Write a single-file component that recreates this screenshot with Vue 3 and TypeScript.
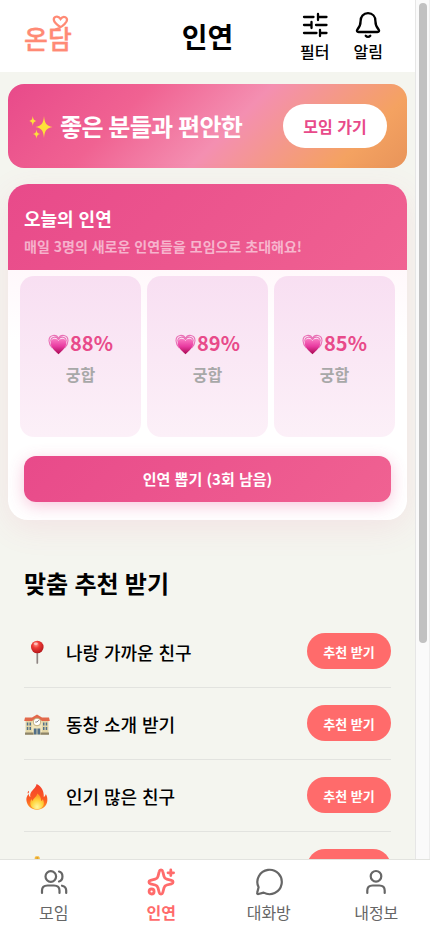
<script setup lang="ts">
interface Match { id: number; score: number }
interface Recommendation { icon: string; label: string }
interface Tab { key: string; label: string; active?: boolean }

const matches: Match[] = [
  { id: 1, score: 88 },
  { id: 2, score: 89 },
  { id: 3, score: 85 },
]

const recommendations: Recommendation[] = [
  { icon: 'pin', label: '나랑 가까운 친구' },
  { icon: 'school', label: '동창 소개 받기' },
  { icon: 'fire', label: '인기 많은 친구' },
  { icon: 'hands', label: '종교가 같은 친구' },
]

const tabs: Tab[] = [
  { key: 'meet', label: '모임' },
  { key: 'match', label: '인연', active: true },
  { key: 'chat', label: '대화방' },
  { key: 'me', label: '내정보' },
]
</script>

<template>
  <div class="screen">
    <svg class="defs" width="0" height="0">
      <defs>
        <linearGradient id="heartFill" x1="0" y1="0" x2="0" y2="1">
          <stop offset="0" stop-color="#fb7cc4" />
          <stop offset=".5" stop-color="#e83aa0" />
          <stop offset="1" stop-color="#a80850" />
        </linearGradient>
        <radialGradient id="ballFill" cx=".4" cy=".3" r=".7">
          <stop offset="0" stop-color="#ff9a90" />
          <stop offset=".4" stop-color="#ee3a35" />
          <stop offset="1" stop-color="#b5181c" />
        </radialGradient>
        <linearGradient id="flameFill" x1="0" y1="0" x2="0" y2="1">
          <stop offset="0" stop-color="#f4402c" />
          <stop offset=".6" stop-color="#fb5a22" />
          <stop offset="1" stop-color="#ff9d25" />
        </linearGradient>
        <radialGradient id="flameCore" cx=".5" cy=".85" r=".7">
          <stop offset="0" stop-color="#fff7a0" />
          <stop offset=".6" stop-color="#ffd43c" />
          <stop offset="1" stop-color="#ff9e2a" />
        </radialGradient>
      </defs>
    </svg>
    <div class="viewport">
      <main class="page">
        <header class="topbar">
          <div class="logo">
            <span>온담</span>
            <svg class="logo-heart" viewBox="0 0 18 16" fill="none">
              <path d="M4 14.5C8 13 13 10 15 6.500C17 2.500 12 0 9 4C6.500 0 1.500 1.500 2.500 5.500C3 8 6 10 8.500 11.800" />
            </svg>
          </div>
          <h1>인연</h1>
          <div class="actions">
            <button class="action">
              <svg viewBox="0 0 28 28" fill="none">
                <path d="M3 6h9.500M17 6h8.500M17 3v6M3 14h7.500M10.500 11v6M15 14h10.500M3 22h12.500M19 22h6.500M19 19v6" />
              </svg>
              <span>필터</span>
            </button>
            <button class="action">
              <svg viewBox="0 0 28 28" fill="none">
                <path d="M14 2.200c-4.700 0-7.400 3.500-7.400 7.800 0 5-1.700 6.800-3.200 8.500-1 1.300-.4 2.500 1.200 2.500h18.800c1.600 0 2.200-1.200 1.200-2.500-1.500-1.700-3.200-3.500-3.200-8.500 0-4.300-2.700-7.800-7.400-7.800zM11.700 24.800c1.300 1.500 3.300 1.500 4.600 0" />
              </svg>
              <span>알림</span>
            </button>
          </div>
        </header>

        <section class="banner">
          <div class="banner-text">
            <svg class="spark" viewBox="0 0 24 24">
              <path fill="#fde03a" d="M15 1c.7 7 2 9.700 8.500 11-6.500 1.300-7.800 4-8.500 11-.7-7-2-9.700-8.500-11 6.500-1.300 7.800-4 8.500-11zM3.800 1c.4 3.200 1 4.300 3.700 5-2.700.7-3.300 1.800-3.700 5-.4-3.200-1-4.300-3.700-5C2.800 5.300 3.400 4.200 3.800 1zM7.500 14.500c.4 3 1 4 3.600 4.600-2.600.6-3.200 1.600-3.600 4.600-.4-3-1-4-3.600-4.600 2.600-.6 3.200-1.600 3.600-4.600z" />
            </svg>
            <p>좋은 분들과 편안한</p>
          </div>
          <button>모임 가기</button>
        </section>

        <section class="today">
          <div class="today-head">
            <h2>오늘의 인연</h2>
            <p>매일 3명의 새로운 인연들을 모임으로 초대해요!</p>
          </div>
          <div class="today-body">
            <div class="cards">
              <article v-for="m in matches" :key="m.id" class="match">
                <strong>
                  <svg class="heart" viewBox="0 0 21 21">
                    <g fill="none" stroke="#e970b5" stroke-width="1.100">
                      <path d="M10.500 4.500C8.500-.2 1 .3 1 6.800c0 3 1.500 5.200 3.500 7.300M10.500 4.500C12.500-.2 20 .3 20 6.800c0 3-1.500 5.200-3.500 7.300" />
                      <path d="M10.500 6C9 1.800 2.700 2.300 2.700 7.500M10.500 6C12 1.800 18.300 2.300 18.300 7.500" />
                    </g>
                    <path fill="url(#heartFill)" d="M10.500 20.300C6 16.500 2.600 12.500 2.600 8.800c0-4.800 6-5.500 7.900-1.800 1.900-3.700 7.900-3 7.900 1.800 0 3.700-3.400 7.700-7.900 11.500z" />
                  </svg>
                  <span>{{ m.score }}%</span>
                </strong>
                <span class="caption">궁합</span>
              </article>
            </div>
            <button class="draw">인연 뽑기 (3회 남음)</button>
          </div>
        </section>

        <section class="recommend">
          <h2>맞춤 추천 받기</h2>
          <ul>
            <li v-for="r in recommendations" :key="r.label">
              <svg class="emoji" viewBox="0 0 26 26">
                <template v-if="r.icon === 'pin'">
                  <path d="M13.300 12v11" stroke="#8f8583" stroke-width="1.700" stroke-linecap="round" />
                  <circle cx="13.300" cy="7" r="6.300" fill="url(#ballFill)" />
                  <ellipse cx="11.800" cy="3.800" rx="2" ry="1.200" fill="#ffd0ca" opacity=".8" />
                </template>
                <g v-else-if="r.icon === 'school'" transform="translate(0 1)">
                  <path fill="#e3d6a6" d="M1.500 7h23v14.500h-23z" />
                  <path fill="#f0e5bd" d="M8 5h10v16.500H8z" />
                  <path fill="#e2694a" d="M1 4.500h7L13 1.500l5 3h7l.8 3.500H18l-5-3.300L8 8H.2z" />
                  <circle cx="13" cy="9" r="3.800" fill="#fff" stroke="#b39b62" stroke-width=".8" />
                  <path d="M13 9l1.800-1.800M13 9h-1.800" stroke="#555" stroke-width=".7" />
                  <path fill="#527089" d="M2.800 9.500h1.500v3H2.800zM5.500 9.500H7v3H5.500zM2.800 14h1.500v3H2.800zM5.500 14H7v3H5.500zM19 9.500h1.500v3H19zM21.700 9.500h1.500v3h-1.500zM19 14h1.500v3H19zM21.700 14h1.500v3h-1.500zM9.800 15.500h2.800v6H9.800zM13.400 15.500h2.800v6h-2.800z" />
                  <path fill="#8d8469" d="M1 19.500h8.500v2.200H1zM16.500 19.500H25v2.200h-8.500z" />
                </g>
                <template v-else-if="r.icon === 'fire'">
                  <path fill="url(#flameFill)" d="M12.600 0c-.7 4-5 6.200-6.200 9.800-.4 1.300-.2 2.400 0 3.200-1.200-.5-1.700-1.700-1.600-3.200C2.700 12 2 14.500 2.500 17c.8 5 5 8.700 10.500 8.700S22.800 22 23.300 17c.3-3-.4-5.200-1.500-7-.3 1.500-.9 2.400-2 3C20 7 17.800 2.500 12.600 0zM5 6.800c-1.300.8-1.700 1.800-1 3 .8-.8 1.200-1.800 1-3z" />
                  <path fill="url(#flameCore)" d="M13.200 9.500c0 3-4 4.600-4.600 7.500-.7-.5-1-1.300-1-2.200C4.500 19.500 7 25.300 13 25.300s8.600-5.300 5.800-10.300c-.3 1-.8 1.600-1.700 2 .2-3-1.200-5.700-3.900-7.500z" />
                </template>
                <template v-else>
                  <path fill="#f5bb3f" d="M10.700 2c0-1.300 1-1.700 2.500-1.700s2.500.4 2.500 1.700l.5 9 5 6-5 8.500h-6l-5-8.500 5-6z" />
                  <path d="M13.200 1v20" stroke="#c98a20" stroke-width=".8" />
                </template>
              </svg>
              <span class="label">{{ r.label }}</span>
              <button>추천 받기</button>
            </li>
          </ul>
        </section>
      </main>
      <div class="scrollbar"><div class="thumb"></div></div>
    </div>

    <nav class="tabs">
      <a v-for="t in tabs" :key="t.key" :class="['tab', { active: t.active }]">
        <svg viewBox="0 0 28 28" fill="none">
          <template v-if="t.key === 'meet'">
            <circle cx="10.800" cy="8.500" r="5.300" />
            <path d="M2 25v-2.500c0-3.500 2.500-5 5.500-5h6.500c3 0 5.500 1.500 5.500 5V25M19 3.500c4.600 1.200 4.600 8.800 0 10M22 17.700c2.800.7 4.200 2.300 4.200 4.800V25" />
          </template>
          <template v-else-if="t.key === 'match'">
            <path d="M12.200 3.600c.5-2.200 3.100-2.200 3.600 0l1.200 4.700c.4 1.500 1.300 2.400 2.800 2.800l4.700 1.200c2.100.5 2.100 3 0 3.500l-4.700 1.200c-1.500.4-2.400 1.300-2.800 2.800l-1.200 4.700c-.5 2.100-3.100 2.100-3.600 0L11 19.800c-.4-1.500-1.300-2.400-2.800-2.800l-4.700-1.200c-2.100-.5-2.100-3 0-3.500l4.700-1.200c1.500-.4 2.400-1.300 2.800-2.800z" />
            <path d="M23.800 2v5.600M21 4.800h5.600" />
            <circle cx="4.600" cy="23.500" r="2.500" />
          </template>
          <path v-else-if="t.key === 'chat'" d="M3.600 19.300A12.200 12.200 0 1 1 8.600 24.600L3.500 26c-1 .2-1.600-.5-1.300-1.400z" />
          <template v-else>
            <circle cx="14" cy="8.300" r="5.300" />
            <path d="M5.300 25v-2.500c0-3.500 2.300-5 5.300-5h6.800c3 0 5.300 1.500 5.300 5V25" />
          </template>
        </svg>
        <span>{{ t.label }}</span>
      </a>
    </nav>
  </div>
</template>

<style>
body { margin: 0; overflow: hidden; }
</style>

<style scoped>
* { box-sizing: border-box; }
.screen {
  width: 430px;
  height: 932px;
  display: flex;
  flex-direction: column;
  overflow: hidden;
  background: #fff;
  color: #000;
  font-family: "Noto Sans CJK KR", sans-serif;
  word-spacing: .05em;
}
.defs { position: absolute; }
h1, h2, p, ul { margin: 0; padding: 0; }
button { border: 0; padding: 0; font: inherit; color: inherit; white-space: nowrap; word-spacing: inherit; }
.viewport { flex: 1; min-height: 0; display: flex; overflow: hidden; }
.page { width: 415px; flex: none; background: #f4f5ef; overflow: hidden; }
.scrollbar {
  flex: 1;
  background: #fafafa;
  border-left: 1px solid #e6e6e6;
  border-right: 1px solid #ededed;
  padding: 3px 2px 0 3px;
}
.thumb { width: 8px; height: 640px; border-radius: 4px; background: #c1c1c1; }

.topbar {
  height: 72px;
  background: #fff;
  display: grid;
  grid-template-columns: 1fr auto 1fr;
  align-items: center;
  padding: 0 24px;
}
.logo {
  position: relative;
  color: #ff8a75;
  font-size: 26px;
  line-height: 40px;
  font-weight: 500;
  padding-top: 3px;
  -webkit-text-stroke: .3px #ff8a75;
}
.logo-heart {
  position: absolute;
  left: 27px;
  top: 0;
  width: 19px;
  height: 16px;
  stroke: currentColor;
  stroke-width: 2.300;
  stroke-linecap: round;
}
h1 { font-size: 28px; line-height: 40px; font-weight: 700; }
.actions { display: flex; justify-content: flex-end; gap: 24px; padding: 1px 8px 0 0; }
.action { background: none; display: flex; flex-direction: column; align-items: center; font-size: 16px; line-height: 24px; font-weight: 500; }
.action svg { width: 28px; height: 28px; stroke: #000; stroke-width: 2.300; stroke-linecap: round; stroke-linejoin: round; }

.banner {
  margin: 12px 8px 0;
  height: 84px;
  padding: 0 20px;
  border-radius: 16px;
  display: flex;
  align-items: center;
  justify-content: space-between;
  color: #fff;
  background: linear-gradient(135deg, #e84a8a 0%, #f06292 30%, #f48fb1 55%, #f4a261 85%, #e8945a 100%);
}
.banner-text { display: flex; align-items: center; gap: 7px; }
.spark { width: 24px; height: 24px; margin: 2px 0 0 1px; }
.banner p { font-size: 24px; line-height: 36px; font-weight: 700; white-space: nowrap; letter-spacing: -.7px; }
.banner button { width: 104px; height: 44px; border-radius: 22px; background: #fff; color: #e84a8a; font-size: 16px; font-weight: 700; }

.today {
  margin: 16px 8px 0;
  height: 336px;
  border-radius: 20px;
  overflow: hidden;
  background: #fff;
  box-shadow: 0 8px 32px rgba(232, 74, 138, .1);
}
.today-head {
  height: 86px;
  padding: 20px 16px 0;
  color: #fff;
  background: linear-gradient(135deg, #e84a8a, #f06292);
}
.today-head h2 { font-size: 18px; line-height: 29px; font-weight: 700; }
.today-head p { font-size: 14px; line-height: 26px; font-weight: 700; color: rgba(255, 255, 255, .56); }
.today-body { padding: 6px 12px 0; background: linear-gradient(180deg, #fff8fb, #fff 30%); }
.cards { display: grid; grid-template-columns: repeat(3, 1fr); gap: 6px; }
.match {
  height: 161px;
  border-radius: 14px;
  background: linear-gradient(180deg, #f8dff2, #fcf0f8);
  display: flex;
  flex-direction: column;
  align-items: center;
  padding-top: 51px;
}
.match strong { display: flex; align-items: center; gap: 1px; font-size: 20px; line-height: 32px; font-weight: 700; color: #e84a8a; }
.heart { width: 21px; height: 21px; margin-top: 3px; }
.caption { font-size: 16px; line-height: 30px; font-weight: 700; color: #a8a8a8; }
.draw {
  display: block;
  width: 367px;
  height: 46.500px;
  margin: 18.500px 4px 0;
  padding-bottom: 1px;
  border-radius: 12px;
  color: #fff;
  font-size: 15px;
  font-weight: 700;
  background: linear-gradient(135deg, #e84a8a, #f06292);
  box-shadow: 0 4px 16px rgba(232, 74, 138, .3);
}

.recommend { padding: 42.500px 24px 0; }
.recommend h2 { font-size: 24px; line-height: 40px; font-weight: 700; }
.recommend ul { list-style: none; margin-top: 13px; }
.recommend li { height: 72px; display: flex; align-items: center; border-bottom: 1px solid #e2e3df; }
.emoji { width: 26px; height: 26px; margin: 3px 16px 0 0; }
.label { flex: 1; font-size: 18px; line-height: 28px; font-weight: 500; padding-top: 1px; }
.recommend button { width: 84px; height: 36px; border-radius: 18px; background: #ff6b6b; color: #fff; font-size: 13px; font-weight: 700; }

.tabs { flex: none; height: 73px; display: grid; grid-template-columns: repeat(4, 1fr); background: #fff; border-top: 1px solid #e2e3df; }
.tab { display: flex; flex-direction: column; align-items: center; padding-top: 8px; color: #666; font-size: 16px; line-height: 24px; font-weight: 400; }
.tab span { margin-top: 4px; }
.tab svg { width: 28px; height: 28px; stroke: currentColor; stroke-width: 2.200; stroke-linecap: round; stroke-linejoin: round; }
.tab.active { color: #ff6b6b; font-weight: 700; }
.tab.active svg { stroke-width: 2.800; }
</style>
